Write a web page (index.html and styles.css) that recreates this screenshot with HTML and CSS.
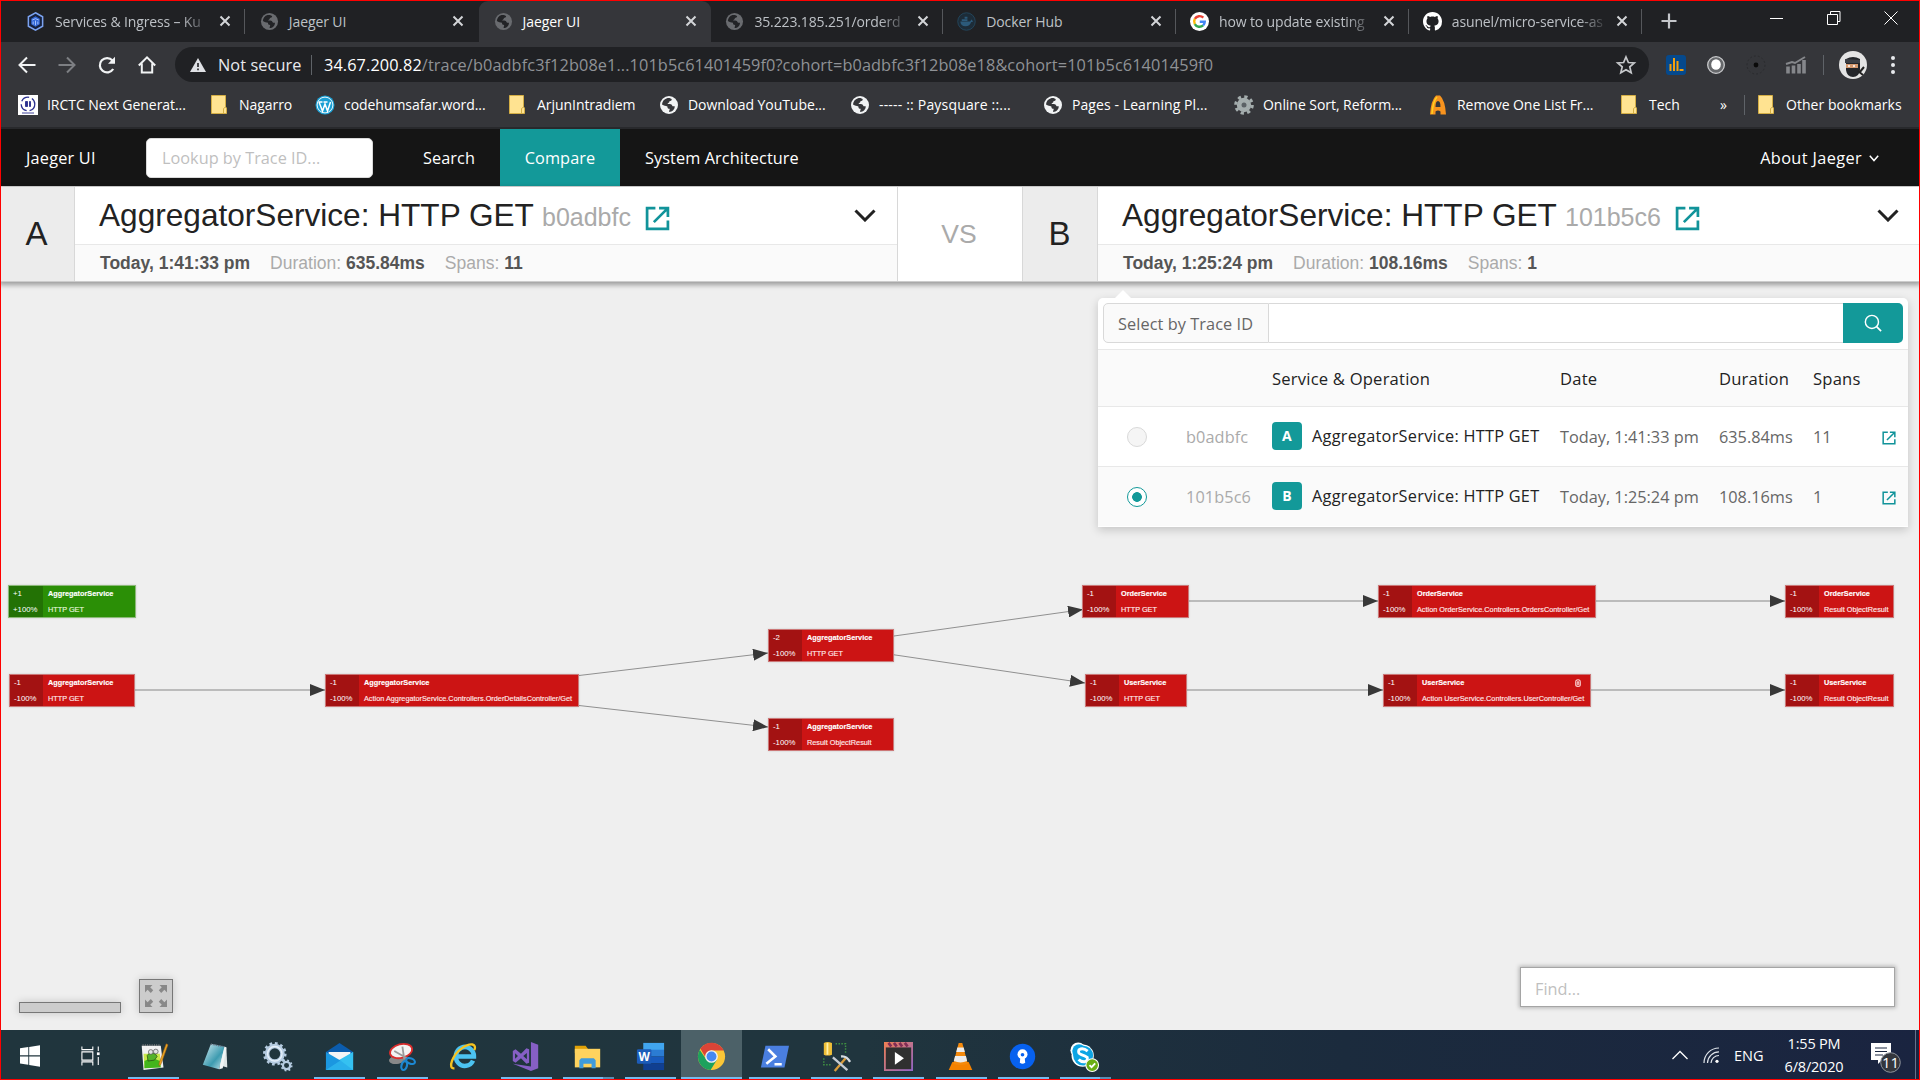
FILE: index.html
```html
<!DOCTYPE html>
<html lang="en">
<head>
<meta charset="utf-8">
<title>Jaeger UI</title>
<link rel="stylesheet" href="styles.css">
</head>
<body>
<svg class="defs" width="0" height="0">
  <symbol id="close" viewBox="0 0 12 12"><path d="M1.5 1.5l9 9M10.5 1.5l-9 9" stroke="currentColor" stroke-width="2" fill="none"/></symbol>
  <symbol id="globe" viewBox="0 0 20 20"><circle cx="10" cy="10" r="9" fill="currentColor"/><path class="land" d="M8 3.2c2.300 -.5 4 .2 4.800 1.200c-.2 1.200-1.200 1.600-2.400 1.800c.2 1.800-1.600 1.600-1.900 2.800c1.500 0 3.800-.3 4.500 1.200c.5 1.300 1.200 1.200 2.700 1c.3 3-2.500 5.600-5.500 5.700c-.4-1.500.8-2 .4-3.200c-1.700 0-2.200-.8-2.200-2.300c-1.800-.2-3.500-.6-5.400-1.800c.2-3 2-5.600 5-6.400z"/></symbol>
  <symbol id="folder" viewBox="0 0 16 19"><path d="M.5.5h14v11.500l1 1v5.500H.5z" fill="#ffe391" stroke="#d4ae45"/><path d="M12.500 18v-4.500l2-1.500" stroke="#d4ae45" fill="none"/></symbol>
  <symbol id="ext" viewBox="0 0 24 24"><path d="M10 2H2v20h20v-8M13.500 2H22v8.500M21.500 2.500L8.500 15.500" fill="none" stroke="currentColor" stroke-width="2.600"/></symbol>
  <symbol id="chev" viewBox="0 0 22 13"><path d="M1.500 1.500L11 11l9.500-9.500" fill="none" stroke="currentColor" stroke-width="3"/></symbol>
</svg>
<div class="screen">
  <header class="browser">
    <div class="tabs">
      <div class="tab">
        <svg class="fav" viewBox="0 0 20 20"><path d="M10 .8l7.500 4.200v10L10 19.200 2.500 15V5z" fill="#16213d" stroke="#7ba2f0" stroke-width="1.600"/><path d="M10 4.500l4.500 2.500v6L10 15.500 5.500 13V7z" fill="#3367d6"/><path d="M6.500 8.500L10 7l3.500 1.500M10 9v5M7.500 10v3M12.500 10v3" stroke="#a9c5ff" fill="none"/></svg>
        <span class="label fade">Services &amp; Ingress – Ku</span><svg class="x"><use href="#close"/></svg>
      </div>
      <div class="tab plain"><svg class="fav dim"><use href="#globe"/></svg><span class="label">Jaeger UI</span><svg class="x"><use href="#close"/></svg></div>
      <div class="tab active plain"><svg class="fav dim"><use href="#globe"/></svg><span class="label">Jaeger UI</span><svg class="x"><use href="#close"/></svg></div>
      <div class="tab"><svg class="fav dim"><use href="#globe"/></svg><span class="label fade">35.223.185.251/orderd</span><svg class="x"><use href="#close"/></svg></div>
      <div class="tab">
        <svg class="fav" viewBox="0 0 20 20"><circle cx="10" cy="10" r="9.200" fill="#1d2c38" stroke="#23465c"/><path d="M3.500 10h10c1-.1 1-1.500 2-2 .6.800.3 1.200 1.500 1.700-1 .8-1.500.7-2 .9-1 3-3 4.400-6 4.400-3.500 0-5.300-2-5.500-5zM5 7.500h6v2H5zM8 5h3v2H8z" fill="#2c5a7a"/></svg>
        <span class="label">Docker Hub</span><svg class="x"><use href="#close"/></svg>
      </div>
      <div class="tab">
        <svg class="fav" viewBox="0 0 20 20"><circle cx="10" cy="10" r="10" fill="#fff"/><g fill="none" stroke-width="2.600"><path d="M14 6A5.600 5.600 0 0 0 5.100 7.300" stroke="#ea4335"/><path d="M5.100 7.300a5.600 5.600 0 0 0 0 5.400" stroke="#fbbc05"/><path d="M5.100 12.700a5.600 5.600 0 0 0 8.700 1.400" stroke="#34a853"/><path d="M13.800 14.100A5.600 5.600 0 0 0 15.500 10.200H10.300" stroke="#4285f4"/></g></svg>
        <span class="label fade">how to update existing</span><svg class="x"><use href="#close"/></svg>
      </div>
      <div class="tab">
        <svg class="fav" viewBox="0 0 16 16"><path fill="#fff" d="M8 0C3.580 0 0 3.580 0 8c0 3.540 2.290 6.530 5.470 7.590.4.070.550-.17.550-.38 0-.19-.01-.82-.01-1.490-2.010.37-2.530-.49-2.690-.94-.09-.23-.48-.94-.82-1.130-.28-.15-.68-.52-.01-.53.630-.01 1.080.58 1.230.82.720 1.210 1.870.87 2.330.66.070-.52.280-.87.510-1.070-1.780-.2-3.640-.89-3.640-3.950 0-.87.310-1.590.82-2.150-.08-.2-.36-1.020.08-2.120 0 0 .67-.21 2.200.82.640-.18 1.320-.27 2-.27s1.360.09 2 .27c1.530-1.040 2.200-.82 2.200-.82.440 1.100.16 1.920.08 2.120.510.56.82 1.270.82 2.150 0 3.070-1.870 3.750-3.650 3.950.290.25.540.73.540 1.480 0 1.070-.01 1.930-.01 2.200 0 .21.150.46.550.38A8.010 8.010 0 0 0 16 8c0-4.420-3.580-8-8-8z"/></svg>
        <span class="label fade">asunel/micro-service-as</span><svg class="x"><use href="#close"/></svg>
      </div>
      <svg class="plus" viewBox="0 0 16 16"><path d="M8 .5v15M.5 8h15" stroke="#c4c6ca" stroke-width="2.200"/></svg>
      <div class="winctl">
        <svg viewBox="0 0 14 14"><path d="M0 7.500h13" stroke="#fff"/></svg>
        <svg viewBox="0 0 14 14"><path d="M.5 3.500h10v10H.5zM3.500 3.500v-3h9.500v10h-2.500" fill="none" stroke="#fff"/></svg>
        <svg viewBox="0 0 14 14"><path d="M.5.5l13 13M13.500.5l-13 13" stroke="#fff" fill="none"/></svg>
      </div>
    </div>
    <div class="toolbar">
      <svg class="nav" viewBox="0 0 20 20"><path d="M18.500 10H3M10 2.500L2.500 10l7.500 7.500" fill="none" stroke="#f1f3f4" stroke-width="2"/></svg>
      <svg class="nav" viewBox="0 0 20 20"><path d="M1.500 10H17M10 2.500l7.500 7.500-7.500 7.500" fill="none" stroke="#7d7f83" stroke-width="2"/></svg>
      <svg class="nav" viewBox="0 0 20 20"><path d="M16.200 14A7.200 7.200 0 1 1 15.500 5.500" fill="none" stroke="#f1f3f4" stroke-width="2.200"/><path d="M18 1.800v7h-7z" fill="#f1f3f4"/></svg>
      <svg class="nav" viewBox="0 0 20 20"><path d="M1.800 10.500L10 2.300l8.200 8.200M4.800 8.500v9h10.400v-9" fill="none" stroke="#f1f3f4" stroke-width="2"/></svg>
      <div class="omnibox">
        <svg class="warn" viewBox="0 0 16 14"><path d="M8 0l8 14H0z" fill="#dfe1e5"/><path d="M8 5v4M8 10.500v1.700" stroke="#202124" stroke-width="1.600"/></svg>
        <span class="insecure">Not secure</span><i class="vbar"></i>
        <span class="url"><b>34.67.200.82</b>/trace/b0adbfc3f12b08e1...101b5c61401459f0?cohort=b0adbfc3f12b08e18&amp;cohort=101b5c61401459f0</span>
        <svg class="star" viewBox="0 0 20 20"><path d="M10 2l2.400 5.500 5.900.5-4.500 3.900 1.400 5.900L10 14.700l-5.200 3.100 1.400-5.900L1.700 8l5.900-.5z" fill="none" stroke="#c6c8cb" stroke-width="1.700"/></svg>
      </div>
      <div class="exts">
        <svg viewBox="0 0 20 20"><rect width="20" height="20" rx="3" fill="#05498c"/><path d="M4.500 9v7M8 3v13M11.500 6v10" stroke="#f5a00c" stroke-width="2"/><path d="M13.500 15h4" stroke="#f5a00c" stroke-width="2"/></svg>
        <svg viewBox="0 0 20 20"><circle cx="10" cy="10" r="8.300" fill="#66686b" stroke="#c9cacc" stroke-width="1.300"/><ellipse cx="10" cy="9.500" rx="4.800" ry="5.300" fill="#fff"/></svg>
        <svg viewBox="0 0 20 20"><circle cx="10" cy="10" r="9" fill="none" stroke="#2b2c2f" stroke-dasharray="2 2"/><circle cx="10" cy="10" r="2.400" fill="#0a0a0a"/></svg>
        <svg viewBox="0 0 20 20"><path d="M2 11.500v7M7.500 10.500v8M13 9v9.500M18 5v13.500" stroke="#85878b" stroke-width="3.600"/><path d="M0 9l6-2 3 1 10-6" stroke="#85878b" stroke-width="2" fill="none"/></svg>
      </div>
      <i class="vbar"></i>
      <svg class="avatar" viewBox="0 0 28 28"><circle cx="14" cy="14" r="14" fill="#e4e4e4"/><path d="M7 8q7-4 14 0v11q-1 7-7 7t-7-7z" fill="#24262a"/><path d="M6 8l15 1v3L6 12z" fill="#3c3f45"/><path d="M7 13h12v4H7z" fill="#d69a70"/><path d="M9 15h2M14 15h2" stroke="#fff" stroke-width="1.600"/><path d="M20 22l5-6M19 20l5 4" stroke="#222" stroke-width="2"/></svg>
      <svg class="dots" viewBox="0 0 4 18"><circle cx="2" cy="2" r="2"/><circle cx="2" cy="9" r="2"/><circle cx="2" cy="16" r="2"/></svg>
    </div>
    <div class="bookmarks">
      <div><svg class="bm" viewBox="0 0 20 20"><path fill="#fff" d="M0 0h20v20H0z"/><circle cx="10" cy="9" r="6.800" fill="none" stroke="#2a2f8f" stroke-width="1.300" stroke-dasharray="9 3"/><path d="M7.500 6.500h2v5h-2zM11.500 6.500h1v5h-1zM4 18h12" fill="#2a2f8f" stroke="#2a2f8f" stroke-width=".9"/></svg>IRCTC Next Generat...</div>
      <div><svg class="fold"><use href="#folder"/></svg>Nagarro</div>
      <div><svg class="bm" viewBox="0 0 20 20"><circle cx="10" cy="10" r="9.500" fill="#1a9fd4"/><circle cx="10" cy="10" r="7.900" fill="none" stroke="#fff" stroke-width=".9"/><path d="M4 7l3.500 9L10 9l2.500 7L15.500 7M3.500 7h4M8.500 7h4" stroke="#fff" stroke-width="1.500" fill="none"/></svg>codehumsafar.word...</div>
      <div><svg class="fold"><use href="#folder"/></svg>ArjunIntradiem</div>
      <div><svg class="bm lit"><use href="#globe"/></svg>Download YouTube...</div>
      <div class="pay"><svg class="bm lit"><use href="#globe"/></svg>----- :: Paysquare ::...</div>
      <div class="pages"><svg class="bm lit"><use href="#globe"/></svg>Pages - Learning Pl...</div>
      <div><svg class="bm" viewBox="0 0 20 20"><circle cx="10" cy="10" r="8.300" fill="none" stroke="#a4adad" stroke-width="3" stroke-dasharray="3.260 3.260"/><circle cx="10" cy="10" r="7.200" fill="#a4adad"/><circle cx="10" cy="10" r="2.500" fill="#5c6266"/></svg>Online Sort, Reform...</div>
      <div><svg class="bm narrow" viewBox="0 0 20 20"><path d="M2 19.500Q3 5 8 .5h4Q17 5 18 19.500h-5.500v-3q-2.500-2-5 0v3z" fill="#f7931e"/><path d="M7.500 12q0-6 2.500-6t2.500 6z" fill="#35363a"/><path d="M4 19Q5 6 9 2" stroke="#ffd21f" stroke-width="1.500" fill="none"/></svg>Remove One List Fr...</div>
      <div><svg class="fold"><use href="#folder"/></svg>Tech</div>
      <div class="more">»</div>
      <div class="other"><svg class="fold"><use href="#folder"/></svg>Other bookmarks</div>
    </div>
  </header>

  <nav class="jaeger">
    <span class="brand">Jaeger UI</span>
    <div class="lookup">Lookup by Trace ID...</div>
    <span class="item search">Search</span>
    <span class="item on">Compare</span>
    <span class="item arch">System Architecture</span>
    <span class="about">About Jaeger <svg viewBox="0 0 10 7"><path d="M.8.800L5 5.500 9.200.800" fill="none" stroke="#fff" stroke-width="1.500"/></svg></span>
  </nav>

  <section class="diffhead">
    <div class="letter">A</div>
    <div class="trace">
      <div class="title"><h1>AggregatorService: HTTP GET</h1><span class="id">b0adbfc</span><svg class="ext"><use href="#ext"/></svg><svg class="chev"><use href="#chev"/></svg></div>
      <div class="meta"><b>Today, 1:41:33 pm</b><span>Duration: <b>635.84ms</b></span><span>Spans: <b>11</b></span></div>
    </div>
    <div class="vs">VS</div>
    <div class="letter b">B</div>
    <div class="trace">
      <div class="title"><h1>AggregatorService: HTTP GET</h1><span class="id">101b5c6</span><svg class="ext"><use href="#ext"/></svg><svg class="chev"><use href="#chev"/></svg></div>
      <div class="meta"><b>Today, 1:25:24 pm</b><span>Duration: <b>108.16ms</b></span><span>Spans: <b>1</b></span></div>
    </div>
  </section>

  <main class="canvas">
    <svg class="edges" viewBox="0 282 1920 748">
      <defs><marker id="tip" markerWidth="15" markerHeight="12" refX="15" refY="6" orient="auto" markerUnits="userSpaceOnUse"><path d="M0 0l15 6-15 6z" fill="#383838"/></marker></defs>
      <g fill="none" stroke="#909090">
        <path class="flat" marker-end="url(#tip)" d="M135 690H325"/>
        <path marker-end="url(#tip)" d="M579 675.500L768 653"/>
        <path marker-end="url(#tip)" d="M579 705.500L768 727"/>
        <path marker-end="url(#tip)" d="M894 636L1083 609.500"/>
        <path marker-end="url(#tip)" d="M894 654.800L1085 683"/>
        <path class="flat" marker-end="url(#tip)" d="M1189 601H1378"/>
        <path class="flat" marker-end="url(#tip)" d="M1187 690H1383"/>
        <path class="flat" marker-end="url(#tip)" d="M1596 601H1785"/>
        <path class="flat" marker-end="url(#tip)" d="M1591 690H1785"/>
      </g>
    </svg>
    <div class="node added" style="left:8px;top:303px;width:128px"><div class="n">+1<br>+100%</div><div class="s"><b>AggregatorService</b><br>HTTP GET</div></div>
    <div class="node" style="left:9px;top:392px;width:126px"><div class="n">-1<br>-100%</div><div class="s"><b>AggregatorService</b><br>HTTP GET</div></div>
    <div class="node" style="left:325px;top:392px;width:254px"><div class="n">-1<br>-100%</div><div class="s"><b>AggregatorService</b><br>Action AggregatorService.Controllers.OrderDetailsController/Get</div></div>
    <div class="node" style="left:768px;top:347px;width:126px"><div class="n">-2<br>-100%</div><div class="s"><b>AggregatorService</b><br>HTTP GET</div></div>
    <div class="node" style="left:768px;top:436px;width:126px"><div class="n">-1<br>-100%</div><div class="s"><b>AggregatorService</b><br>Result ObjectResult</div></div>
    <div class="node" style="left:1082px;top:303px;width:107px"><div class="n">-1<br>-100%</div><div class="s"><b>OrderService</b><br>HTTP GET</div></div>
    <div class="node" style="left:1085px;top:392px;width:102px"><div class="n">-1<br>-100%</div><div class="s"><b>UserService</b><br>HTTP GET</div></div>
    <div class="node" style="left:1378px;top:303px;width:218px"><div class="n">-1<br>-100%</div><div class="s"><b>OrderService</b><br>Action OrderService.Controllers.OrdersController/Get</div></div>
    <div class="node" style="left:1383px;top:392px;width:208px"><div class="n">-1<br>-100%</div><div class="s"><b>UserService</b><svg class="clip" viewBox="0 0 7 9"><path d="M.8 3.500a2.700 2.700 0 0 1 5.400 0v3a2.700 2 0 0 1-5.400 0zM2.600 7V4a.9.9 0 0 1 1.800 0v3" fill="none" stroke="#fbd5d5" stroke-width="1.200"/></svg><br>Action UserService.Controllers.UserController/Get</div></div>
    <div class="node" style="left:1785px;top:303px;width:109px"><div class="n">-1<br>-100%</div><div class="s"><b>OrderService</b><br>Result ObjectResult</div></div>
    <div class="node" style="left:1785px;top:392px;width:109px"><div class="n">-1<br>-100%</div><div class="s"><b>UserService</b><br>Result ObjectResult</div></div>

    <div class="popover">
      <div class="selector">
        <span class="addon">Select by Trace ID</span><span class="field"></span>
        <span class="go"><svg viewBox="0 0 20 20"><circle cx="8.800" cy="8.800" r="7.300" fill="none" stroke="#fff" stroke-width="1.600"/><path d="M14 14l5 5" stroke="#fff" stroke-width="1.800"/></svg></span>
      </div>
      <div class="row head"><span></span><span></span><span>Service &amp; Operation</span><span>Date</span><span>Duration</span><span>Spans</span><span></span></div>
      <div class="row"><i class="radio off"></i><span class="rid">b0adbfc</span><span class="svc"><em>A</em>AggregatorService: HTTP GET</span><span>Today, 1:41:33 pm</span><span>635.84ms</span><span>11</span><svg class="ext"><use href="#ext"/></svg></div>
      <div class="row sel"><i class="radio"></i><span class="rid">101b5c6</span><span class="svc"><em>B</em>AggregatorService: HTTP GET</span><span>Today, 1:25:24 pm</span><span>108.16ms</span><span>1</span><svg class="ext"><use href="#ext"/></svg></div>
    </div>

    <div class="minimap"></div>
    <div class="reset"><svg viewBox="0 0 22 22"><g fill="#888"><path id="ar" d="M0 0h7.500L5.200 2.300l3 3L5.800 8 2.600 4.800 0 7.500z"/><use href="#ar" transform="matrix(-1 0 0 1 22 0)"/><use href="#ar" transform="matrix(1 0 0 -1 0 22)"/><use href="#ar" transform="matrix(-1 0 0 -1 22 22)"/></g></svg></div>
    <div class="find">Find...</div>
  </main>

  <footer class="taskbar">
    <div class="task sys"><svg viewBox="0 0 20 22" class="win"><path fill="#fff" d="M0 3.200L8.300 2v8.300H0zM9.200 1.900L20 .300v10H9.200zM0 11.400h8.300v8.300L0 18.600zM9.200 11.400H20v10.300L9.200 20z"/></svg></div>
    <div class="task sys"><svg viewBox="0 0 22 22" class="view"><path d="M1 .5v3.500h12V.5M1 21.500v-4h12v4M1 6.500h12v9H1zM19 .5v5M19 12v9" fill="none" stroke="#fff" stroke-width="1.200"/><path d="M17.500 7h3v3h-3z" fill="#fff"/></svg></div>
    <div class="task run"><svg viewBox="0 0 32 32"><path d="M3 4h21l3 24-22 3z" fill="#f2f2f2"/><path d="M5 13h18l1 14-18 2z" fill="#c8e84a"/><path d="M6 21q8-5 17 0l1 7-18 1z" fill="#43b51c"/><path d="M9 15q2-4 6-3t5 4l-3 4-7 1z" fill="#55b32a" stroke="#254d10" stroke-width=".8"/><circle cx="13" cy="11" r="2.600" fill="#e4e4e4" stroke="#555" stroke-width=".8"/><circle cx="18.500" cy="10.500" r="2.600" fill="#e4e4e4" stroke="#555" stroke-width=".8"/><path d="M4 3.500h20" stroke="#888" stroke-width="2" stroke-dasharray="1 1.500"/><path d="M30 2l2 1-8 22-2 1 .3-3z" fill="#eaa523" stroke="#9b5c13" stroke-width=".6"/></svg></div>
    <div class="task"><svg viewBox="0 0 32 32"><defs><linearGradient id="np" x2="1" y2="1"><stop stop-color="#d5edf3"/><stop offset=".6" stop-color="#3d9bb0"/><stop offset="1" stop-color="#c9e6ec"/></linearGradient></defs><path d="M12 3l16 3 1 22-8-2z" fill="#dfe6e6"/><path d="M11 2l15 3-6 25L2 25z" fill="url(#np)"/><path d="M20 30l4-1 4-23-2-1z" fill="#f1f5f5"/><path d="M11 2.500l15 2.800" stroke="#667" stroke-width="1.500" stroke-dasharray="1 1"/></svg></div>
    <div class="task"><svg viewBox="0 0 32 32"><g fill="none" stroke="#b5cbe0"><circle cx="13" cy="13" r="8.500" stroke-width="5"/><circle cx="13" cy="13" r="11.500" stroke-width="3" stroke-dasharray="3 3"/><circle cx="26" cy="26" r="4" stroke-width="2.500"/><circle cx="26" cy="26" r="5.600" stroke-width="2" stroke-dasharray="2 2.400"/></g><circle cx="13" cy="13" r="8" fill="none" stroke="#e6f0fa" stroke-width="1.500"/></svg></div>
    <div class="task run"><svg viewBox="0 0 32 32"><path d="M1 11L16 1l15 10v5H1z" fill="#0b5cad"/><path d="M4 11h24v12H4z" fill="#f4f4f6"/><path d="M31 11v20H1v-3z" fill="#35c1f1"/><path d="M1 11v20h30L17 20.500z" fill="#1b97e0"/><path d="M31 11L17 20.500 1 31h0l30 0z" fill="#35c1f1" opacity=".6"/></svg></div>
    <div class="task run"><svg viewBox="0 0 32 32"><ellipse cx="12" cy="19" rx="10" ry="5" fill="#888" transform="rotate(-12 12 19)"/><ellipse cx="15.500" cy="10" rx="12.500" ry="7.500" fill="#f3f3f3" stroke="#d92c2c" stroke-width="2" transform="rotate(-14 15.500 10)"/><path d="M8 10l14 8M17 5l2 14" stroke="#9a9a9a" stroke-width="2"/><g fill="none" stroke="#1c87d2" stroke-width="2.400"><ellipse cx="19" cy="26" rx="3" ry="5" transform="rotate(15 19 26)"/><ellipse cx="26" cy="21" rx="5" ry="3" transform="rotate(20 26 21)"/></g></svg></div>
    <div class="task"><svg viewBox="0 0 32 32"><path d="M26.500 20.500a10 10.500 0 1 1 1-4.500H10" fill="none" stroke="#4cc3f1" stroke-width="5"/><path d="M6 29C-2 30 4 14 14 7S31 2 28 9" fill="none" stroke="#f6c321" stroke-width="2.600"/></svg></div>
    <div class="task run"><svg viewBox="0 0 32 32"><path d="M22 0l8 3v26l-8 3L2 24l20 3z" fill="#865fc5"/><path d="M2 10l3-2 6 5 6-6 3 1v15l-3 1-6-6-6 5-3-2z" fill="#865fc5"/><path d="M4.500 12.500v6l3.200-3zM13.500 15.500l4 3.500v-7z" fill="#20353e"/></svg></div>
    <div class="task run multi"><svg viewBox="0 0 32 32"><path d="M2 4h12l2 3v5H2z" fill="#e0a106"/><path d="M2 7.500h28V28H2z" fill="#ffd35e"/><path d="M7 29v-9l2-2h14l2 2v9h-4.500v-5h-9v5z" fill="#3f9bdc"/></svg></div>
    <div class="task run"><svg viewBox="0 0 32 32"><path d="M8 1h23v8H8z" fill="#41a5ee"/><path d="M8 8.500h23V16H8z" fill="#2b7cd3"/><path d="M8 16h23v7.500H8z" fill="#185abd"/><path d="M8 23.500h23V31H8z" fill="#103f91"/><rect x="1" y="8" width="16" height="16" rx="1.500" fill="#1c5cb9"/><text x="9" y="21" text-anchor="middle" class="logo">W</text></svg></div>
    <div class="task run front"><svg viewBox="0 0 32 32"><circle cx="16" cy="16" r="15" fill="#fbc637"/><path d="M3 8.500A15 15 0 0 0 15 31l7-11.500L10 19z" fill="#1da15d"/><path d="M29.500 9.500H16A6.500 6.500 0 0 0 9.500 17L3.700 7.200A15 15 0 0 1 29.500 9.500z" fill="#db4437"/><circle cx="16" cy="16" r="7" fill="#f1f1f1"/><circle cx="16" cy="16" r="5.500" fill="#4688f1"/></svg></div>
    <div class="task run"><svg viewBox="0 0 32 32"><path d="M6 4h26l-5 24H1z" fill="#4a7fe0"/><path d="M9 8l8 8-10 8M16 24.500h8" fill="none" stroke="#fff" stroke-width="2.800"/></svg></div>
    <div class="task run"><svg viewBox="0 0 32 32"><path d="M2 1q4-2 9 0v13q-5 2-9 0z" fill="#efbf38"/><path d="M5 1h2v13H5z" fill="#fff0a8"/><path d="M15 2h11v11M2 18v7h8" fill="none" stroke="#3f9142" stroke-width="1.600" stroke-dasharray="1.600 1.600"/><path d="M26 18L14 32" stroke="#d99c3c" stroke-width="2.600"/><path d="M12 17l16 14" stroke="#c4cbd4" stroke-width="2.600"/><path d="M21 16q6-1 10 6" stroke="#d6dbe2" stroke-width="2.600" fill="none"/></svg></div>
    <div class="task run"><svg viewBox="0 0 32 32"><defs><linearGradient id="mv" x2="1" y2="1"><stop stop-color="#f08052"/><stop offset="1" stop-color="#9064c8"/></linearGradient></defs><path d="M0 0h32v32H0z" fill="url(#mv)"/><path d="M2 6h28v24H2z" fill="#303030"/><path d="M5 1l3 4M11 1l3 4M17 1l3 4M23 1l3 4" stroke="#812c54" stroke-width="3"/><path d="M12 11l10 7-10 7z" fill="#fff"/></svg></div>
    <div class="task run"><svg viewBox="0 0 32 32"><path d="M7 22h18l4 9H3z" fill="#f58200"/><path d="M14 1h4l6 23q-8 3-16 0z" fill="#f58a0c"/><path d="M12.500 6h7l1.300 5h-9.500zM10 15.500h12l1.300 5.500q-7.300 3-14.700 0z" fill="#ececec"/></svg></div>
    <div class="task run"><svg viewBox="0 0 32 32"><circle cx="16" cy="16" r="14" fill="#0761ef"/><circle cx="16" cy="13.500" r="5.500" fill="#fff"/><path d="M14 14h4l1 9q-3 2-6 0z" fill="#fff"/><circle cx="16" cy="14" r="2" fill="#0761ef"/></svg></div>
    <div class="task run multi"><svg viewBox="0 0 32 32"><circle cx="14" cy="15" r="12.300" fill="#fff"/><circle cx="9" cy="9" r="8.500" fill="#fff"/><circle cx="10" cy="10" r="7.500" fill="#0ea5e4"/><circle cx="14.500" cy="15" r="11" fill="#0ea5e4"/><path d="M19.500 10q-5-4-9.500-1.500-2 4 2.500 5.500t6.500 3q1 4-3 4.800-4 .2-6.500-2.500" fill="none" stroke="#fff" stroke-width="3.200"/><circle cx="24.500" cy="25.500" r="7" fill="#6aae14" stroke="#fff" stroke-width="1.200"/><path d="M21.500 25.500l2.300 2.300 4-4.300" fill="none" stroke="#fff" stroke-width="2"/></svg></div>
    <div class="tray">
      <svg class="up" viewBox="0 0 16 10"><path d="M.5 9L8 1.500 15.500 9" fill="none" stroke="#fff" stroke-width="1.300"/></svg>
      <svg class="wifi" viewBox="0 0 16 16"><g fill="none" stroke="#dfe4ea" stroke-width="1.200"><path d="M1 16A15 15 0 0 1 16 1"/><path d="M4.500 16A11.500 11.500 0 0 1 16 4.800"/><path d="M8 16a8 8 0 0 1 8-7.500"/></g><circle cx="14" cy="14.300" r="1.600" fill="#fff"/></svg>
      <span class="lang">ENG</span>
      <span class="clock">1:55 PM<br>6/8/2020</span>
      <svg class="note" viewBox="0 0 30 31"><path d="M0 1h20v17H11l-4 4v-4H0z" fill="#fff"/><path d="M4 6h12M4 9.500h12M4 13h8" stroke="#1a2740" stroke-width="1.200"/><circle cx="19.500" cy="20.500" r="9.800" fill="#34373d" stroke="#8d939c"/><text x="19.500" y="26" text-anchor="middle" class="badge">11</text></svg>
      <i class="desk"></i>
    </div>
  </footer>
</div>
</body>
</html>
```
FILE: styles.css
```css
* { box-sizing: border-box; }
body { margin: 0; font-family: "Open Sans", "Noto Sans", sans-serif; }
.defs { position: absolute; }
svg { display: block; flex: none; overflow: visible; }
i, em { font-style: normal; }
.screen { position: relative; width: 1920px; height: 1080px; overflow: hidden; display: flex; flex-direction: column; background: #efefef; }
.screen::after { content: ""; position: absolute; inset: 0; border: 1px solid #f00; pointer-events: none; z-index: 5; }

/* browser chrome */
.browser { height: 129px; background: #35363a; border-bottom: 2px solid #28292c; color: #fff; white-space: nowrap; }
.tabs { height: 42px; background: #202124; display: flex; align-items: flex-end; padding-left: 12px; }
.tab { width: 232.8px; height: 41px; display: flex; align-items: center; padding: 0 12px 1px 14px; font-size: 14px; letter-spacing: -.1px; color: #bdc1c6; position: relative; }
.tab::after { content: ""; position: absolute; right: 0; top: 8px; width: 1px; height: 25px; background: #55575b; }
.tab.plain::after { display: none; }
.tab.active { background: #35363a; color: #fff; border-radius: 9px 9px 0 0; left: 1px; }
.fav { width: 19px; height: 19px; margin-right: 10px; }
.fav.dim { margin-left: 1px; }
.dim { color: #696b6f; --land: #222326; }
.lit { color: #f1f3f4; --land: #35363a; }
.land { fill: var(--land); }
.label { flex: 1; white-space: nowrap; }
.label.fade { -webkit-mask: linear-gradient(90deg, #000 82%, transparent 102%); mask: linear-gradient(90deg, #000 82%, transparent 102%); letter-spacing: -.14px; }
.tab .x { width: 12px; height: 12px; margin: 0 2px 0 10px; color: #d3d5d8; }
.plus { width: 16px; height: 16px; margin: 0 0 13px 19px; }
.winctl { margin-left: auto; display: flex; gap: 43px; padding-right: 22px; margin-bottom: 17px; }
.winctl svg { width: 14px; height: 14px; }
.toolbar { height: 45px; display: flex; align-items: center; padding: 0 20px 0 17px; }
.nav { width: 20px; height: 20px; margin-right: 20px; }
.omnibox { width: 1474px; height: 35px; margin-left: -2px; border-radius: 18px; background: #202124; display: flex; align-items: center; padding: 0 13px 0 15px; font-size: 16.300px; }
.warn { width: 16px; height: 14px; margin-right: 12px; }
.insecure { color: #e8eaed; width: 93px; letter-spacing: .1px; }
.vbar { width: 1px; height: 20px; background: #5f6368; }
.url { flex: 1; margin-left: 12px; color: #8f9296; letter-spacing: .1px; }
.url b { font-weight: 400; color: #fff; }
.star { width: 20px; height: 20px; }
.exts { display: flex; gap: 20px; margin: 0 17px 0 17px; }
.exts svg { width: 20px; height: 20px; }
.avatar { width: 28px; height: 28px; margin-left: 15px; }
.dots { width: 4px; height: 18px; margin-left: auto; margin-right: 5px; fill: #e8eaed; }
.bookmarks { height: 40px; display: grid; grid-template-columns: 193px 104px 194px 150px 191px 193px 191px 194px 193px 99px 24px 1fr; padding-left: 18px; padding-bottom: 5px; align-items: center; font-size: 14px; letter-spacing: -.05px; }
.bookmarks > div { display: flex; align-items: center; }
.bookmarks .pay { letter-spacing: .18px; }
.bookmarks .pages { letter-spacing: .08px; }
.bm { width: 20px; height: 20px; margin-right: 9px; }
.fold { width: 16px; height: 19px; margin-right: 12px; }
.bookmarks .other { border-left: 1px solid #5f6368; padding-left: 13px; height: 20px; letter-spacing: .05px; }

/* application nav */
.jaeger { height: 58px; background: #151515; color: #fff; display: flex; align-items: center; font-size: 16.300px; white-space: nowrap; border-bottom: 1px solid #ddd; }
.brand { width: 120px; margin-left: 26px; letter-spacing: .2px; padding-top: 1px; }
.lookup { width: 227px; height: 40px; border-radius: 5px; background: #fff; border: 1px solid #d9d9d9; color: #bfbfbf; padding: 0 15px; line-height: 39px; margin-right: 25px; }
.item { align-self: stretch; display: flex; align-items: center; padding: 1px 25px 0; letter-spacing: .08px; }
.item.search { width: 102px; }
.item.on { background: #139999; width: 120px; padding: 1px 0 0; justify-content: center; }
.about { margin-left: auto; margin-right: 41px; display: flex; align-items: center; gap: 7px; letter-spacing: .38px; padding-top: 1px; }
.about svg { width: 10px; height: 7px; }

/* comparison header */
.diffhead { height: 95px; display: flex; background: #fff; font-family: "Liberation Sans", Arial, sans-serif; border-bottom: 1px solid #ccc; box-shadow: 0 2px 5px 1px rgba(0,0,0,.35); z-index: 2; white-space: nowrap; }
.letter { width: 75px; background: #ececec; border-right: 1px solid #d8d8d8; font-size: 33px; color: #222; display: flex; align-items: center; justify-content: center; padding: 0 1px 0 0; }
.letter.b { border-left: 1px solid #d8d8d8; width: 76px; }
.trace { width: 822px; flex: none; }
.title { height: 58px; display: flex; align-items: center; padding: 0 21px 0 24px; border-bottom: 1px solid #e8e8e8; }
.title h1 { margin: 0; font-weight: 400; font-size: 31.600px; width: 443px; color: #222; }
.title .id { font-size: 25px; color: #aaa; margin-right: 14px; padding-top: 4px; }
.ext { width: 25px; height: 25px; color: #11939a; }
.title .ext { margin-top: 5px; }
.chev { width: 22px; height: 13px; margin-left: auto; color: #222; }
.meta { height: 36px; background: #fafafa; display: flex; align-items: center; gap: 20px; padding-left: 25px; font-size: 17.500px; color: #aaa; }
.meta b { color: #555; }
.vs { width: 125px; border-left: 1px solid #d8d8d8; color: #aaa; font-size: 26.500px; display: flex; align-items: center; justify-content: center; padding-right: 2px; }

/* graph canvas */
.canvas { position: relative; flex: 1; background: #efefef; }
.edges { position: absolute; left: 0; top: 0; width: 1920px; height: 748px; }
.edges .flat { stroke: #aaa; stroke-width: 1.600; }
.node { position: absolute; height: 33px; display: flex; background: #cc1414; border: 1px solid #c77; box-shadow: 0 0 2px rgba(0,0,0,.15); color: #ffe9e9; font: 7.300px/16px "Liberation Sans", Arial, sans-serif; white-space: nowrap; }
.node b { color: #fff; }
.node .n { width: 33px; padding-left: 4px; background: #a31212; color: #fff; font-size: 7.800px; }
.node .s { flex: 1; padding-left: 5px; position: relative; -webkit-text-stroke: .15px; }
.node.added { background: #2b8f06; border-color: #8cba78; color: #e4f7dc; }
.node.added .n { background: #237205; width: 34px; }
.clip { position: absolute; right: 9px; top: 4px; width: 6px; height: 8px; }

/* trace selector */
.popover { position: absolute; left: 1098px; top: 16px; width: 810px; height: 229px; background: #fff; border-radius: 5px 5px 0 0; box-shadow: 0 3px 10px rgba(0,0,0,.18); font-size: 16.300px; color: #666; white-space: nowrap; }
.popover::before { content: ""; position: absolute; left: 17px; top: -8px; border: 8px solid transparent; border-top: 0; border-bottom-color: #fff; }
.selector { height: 51px; padding: 5px; display: flex; }
.addon { width: 166px; height: 40px; border: 1px solid #d9d9d9; background: #fafafa; border-radius: 5px 0 0 5px; padding: 1px 0 0 14px; line-height: 38px; letter-spacing: .08px; }
.field { flex: 1; height: 40px; border: solid #d9d9d9; border-width: 1px 0; }
.go { width: 60px; height: 40px; background: #139999; border-radius: 0 5px 5px 0; display: grid; place-items: center; }
.go svg { width: 18px; height: 18px; }
.row { height: 60px; border-top: 1px solid #e8e8e8; display: grid; grid-template-columns: 88px 86px 288px 159px 94px 69px 15px; align-items: center; }
.row.head { height: 57px; background: #fafafa; color: #222; font-weight: 500; font-size: 16.600px; letter-spacing: .2px; padding-top: 1px; }
.row.sel { background: #fafafa; }
.rid { color: #aaa; letter-spacing: .1px; }
.radio { width: 20px; height: 20px; border-radius: 50%; border: 1px solid #139999; margin-left: 29px; background: radial-gradient(circle, #139999 4.500px, #fff 5.200px); }
.radio.off { background: #f5f5f5; border-color: #d9d9d9; }
.svc { color: #222; display: flex; align-items: center; letter-spacing: .27px; padding-bottom: 2px; }
.svc em { width: 30px; height: 28px; background: #139999; border-radius: 4px; color: #fff; font-size: 14px; font-weight: 700; display: grid; place-items: center; margin-right: 10px; }
.row .ext { width: 14px; height: 14px; margin-top: 3px; }

.minimap { position: absolute; left: 19px; bottom: 17px; width: 102px; height: 11px; background: #ccc; border: 1px solid #777; box-shadow: 0 0 8px rgba(0,0,0,.18); }
.reset { position: absolute; left: 139px; bottom: 17px; width: 34px; height: 34px; background: #ccc; border: 1px solid #777; box-shadow: 0 0 8px rgba(0,0,0,.18); display: grid; place-items: center; }
.reset svg { width: 22px; height: 22px; }
.find { position: absolute; left: 1520px; top: 685px; width: 375px; height: 40px; background: #fff; border: 1px solid #a5a5a5; box-shadow: 0 0 4px 1px rgba(0,0,0,.25); color: #bfbfbf; font-size: 16.300px; line-height: 42px; padding-left: 14px; }

/* taskbar */
.taskbar { height: 50px; display: flex; background: linear-gradient(90deg, #20353d 0, #20353e 45%, #1b2b3d 70%, #1a2440 100%); color: #fff; }
.task { width: 62.130px; display: flex; align-items: center; justify-content: center; position: relative; flex: none; }
.task.sys { width: 61px; }
.task.sys:first-child { padding-right: 1px; }
.task svg { width: 29px; height: 29px; margin-top: 2px; }
.task svg.win { width: 20px; height: 22px; }
.task svg.view { width: 22px; height: 20px; margin-right: 2px; }
.task.run::after { content: ""; position: absolute; left: 6px; bottom: 1px; width: 51px; height: 2px; background: #76b9ed; }
.task.multi::after { background: linear-gradient(90deg, #76b9ed 40px, #5a8cb3 40px); }
.task.front { background: #4c6168; width: 61px; margin-right: 1px; }
.task.front::after { left: 0; width: 61px; }
.logo { font: 700 13px "Open Sans", sans-serif; fill: #fff; }
.tray { margin-left: auto; display: flex; align-items: center; font-size: 14.500px; }
.up { width: 16px; height: 10px; margin-right: 15px; }
.wifi { width: 16px; height: 16px; margin-right: 15px; }
.lang { width: 49px; }
.clock { width: 62px; text-align: center; line-height: 23px; letter-spacing: -.2px; }
.note { width: 30px; height: 31px; margin: 4px 0 0 26px; }
.badge { font: 15px "Open Sans", sans-serif; fill: #fff; }
.desk { width: 5px; height: 50px; border-left: 1px solid #66718a; margin-left: 14px; }
```
